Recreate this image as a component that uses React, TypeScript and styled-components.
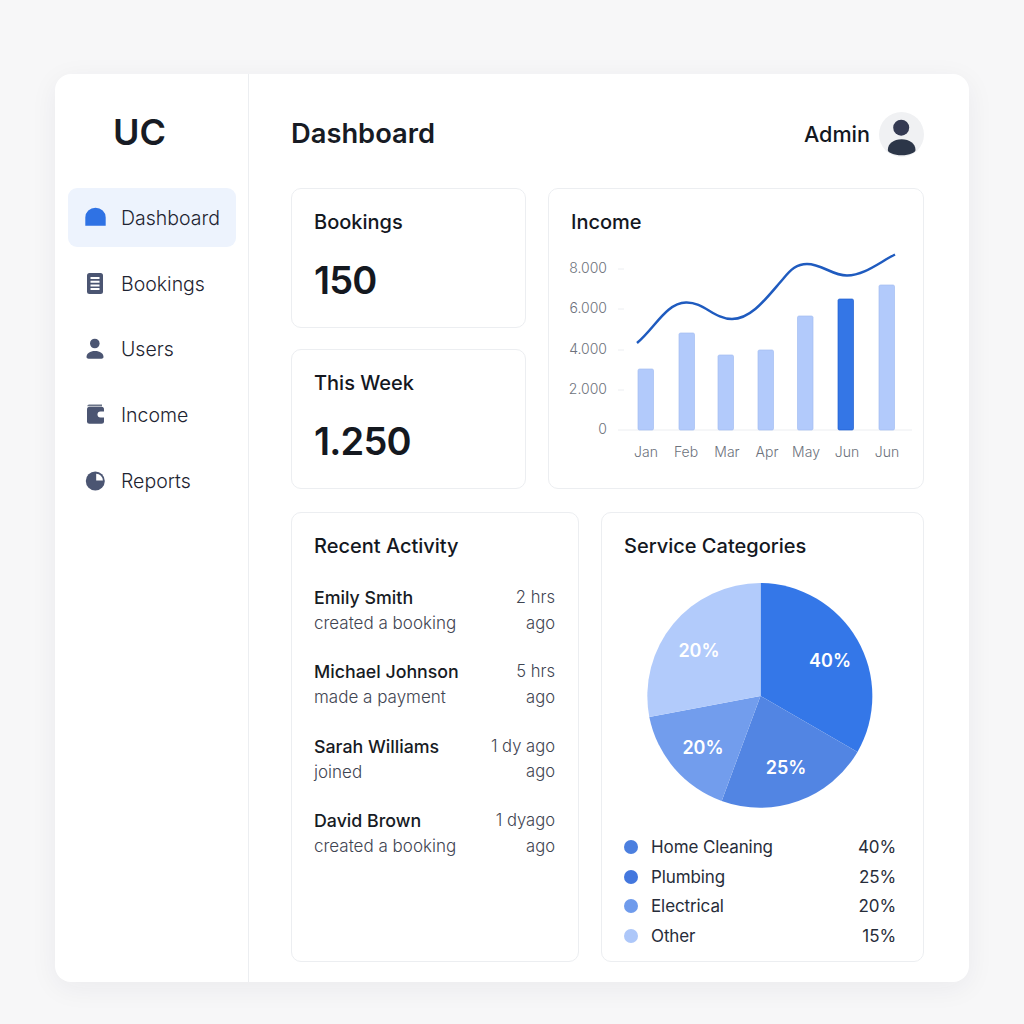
import React from "react";
import styled, { createGlobalStyle } from "styled-components";

const GlobalStyle = createGlobalStyle`
  html, body {
    margin: 0;
    padding: 0;
    background: #f7f7f8;
    font-family: "Inter", "Liberation Sans", sans-serif;
    color: #14181f;
  }
  * { box-sizing: border-box; }
`;

const Page = styled.div`
  width: 1024px;
  height: 1024px;
  padding: 74px 55px 42px;
`;

const Shell = styled.div`
  display: flex;
  width: 914px;
  height: 908px;
  background: #fff;
  border-radius: 16px;
  box-shadow: 0 6px 28px rgba(30, 40, 60, 0.06);
  overflow: hidden;
`;

const Sidebar = styled.aside`
  width: 194px;
  flex: none;
  border-right: 1px solid #eceef1;
  padding: 0 12px 0 13px;
`;

const Logo = styled.div`
  height: 114px;
  padding: 36px 0 0 45px;
  font-size: 36px;
  line-height: 44px;
  font-weight: 600;
  color: #171b24;
`;

const Nav = styled.nav`
  display: flex;
  flex-direction: column;
  gap: 6.7px;
`;

const NavItem = styled.div<{ $active?: boolean }>`
  display: flex;
  align-items: center;
  gap: 15px;
  height: 59px;
  padding: 1px 0 0 16px;
  border-radius: 9px;
  font-size: 19.5px;
  font-weight: 300;
  color: #1e2431;
  background: ${(p) => (p.$active ? "#edf3fd" : "transparent")};
`;

const NavIcon = styled.svg`
  width: 22px;
  height: 24px;
  flex: none;
`;

const Main = styled.main`
  flex: 1;
  padding: 0 45px 20px 42px;
`;

const Header = styled.header`
  display: flex;
  align-items: center;
  justify-content: space-between;
  height: 114px;
  padding-top: 6px;
`;

const Title = styled.h1`
  margin: 0;
  font-size: 27.3px;
  line-height: 34px;
  font-weight: 600;
  color: #171b24;
`;

const Profile = styled.div`
  display: flex;
  align-items: center;
  gap: 9px;
  font-size: 21.6px;
  font-weight: 500;
  color: #14181f;
`;

const Avatar = styled.svg`
  width: 45px;
  height: 45px;
  display: block;
`;

const TopRow = styled.section`
  display: grid;
  grid-template-columns: 235px 376px;
  gap: 22px;
  height: 301px;
`;

const StatColumn = styled.div`
  display: flex;
  flex-direction: column;
  gap: 21px;
`;

const Card = styled.div`
  border: 1px solid #eceef1;
  border-radius: 10px;
  background: #fff;
  padding: 21px 22px 10px;
  min-height: 0;
`;

const StatCard = styled(Card)`
  height: 140px;
`;

const CardTitle = styled.h2`
  margin: 0;
  font-size: 20px;
  line-height: 24px;
  font-weight: 500;
  color: #14181f;
`;

const StatValue = styled.div`
  margin-top: 23px;
  font-size: 38px;
  line-height: 46px;
  font-weight: 600;
  letter-spacing: -0.8px;
  color: #14181f;
`;

const ChartSvg = styled.svg`
  display: block;
  width: 360px;
  height: 210px;
  margin: 16px 0 0 -11px;
`;

const AxisLabel = styled.text<{ $anchor: string }>`
  font-size: 14px;
  fill: #6d727c;
  text-anchor: ${(p) => p.$anchor};
  font-weight: 300;
`;

const BottomRow = styled.section`
  display: grid;
  grid-template-columns: 288px 323px;
  grid-template-rows: 450px;
  gap: 22px;
  margin-top: 23px;
`;

const ActivityList = styled.div`
  margin-top: 27px;
  display: flex;
  flex-direction: column;
  gap: 23.4px;
`;

const ActivityRow = styled.div`
  display: flex;
  justify-content: space-between;
  padding-right: 1px;
`;

const ActivityText = styled.div`
  display: flex;
  flex-direction: column;
`;

const ActivityName = styled.span`
  font-size: 17.8px;
  line-height: 25px;
  font-weight: 500;
  color: #171b24;
`;

const ActivityNote = styled.span`
  font-size: 17px;
  line-height: 26px;
  font-weight: 300;
  color: #3f4552;
`;

const ActivityTime = styled.span`
  text-align: right;
  font-size: 16.6px;
  line-height: 25.500px;
  font-weight: 300;
  color: #3f4552;
`;

const PieSvg = styled.svg`
  display: block;
  width: 240px;
  height: 236px;
  margin: 20px 0 0 16px;
`;

const PieLabel = styled.text`
  font-size: 18px;
  font-weight: 600;
  fill: #fff;
  text-anchor: middle;
  dominant-baseline: central;
`;

const Legend = styled.div`
  margin-top: 18px;
  padding-right: 5px;
`;

const LegendRow = styled.div`
  display: flex;
  align-items: center;
  height: 29.7px;
  font-size: 17px;
  font-weight: 400;
  letter-spacing: -0.1px;
  color: #272d3a;
`;

const LegendDot = styled.span<{ $color: string }>`
  width: 14px;
  height: 14px;
  border-radius: 50%;
  margin-right: 13px;
  background: ${(p) => p.$color};
`;

const LegendValue = styled.span`
  margin-left: auto;
`;

const ICON = "#4b5572";

const navItems = [
  {
    label: "Dashboard",
    active: true,
    icon: <path d="M1.300 19.700V11.500a10.200 9.800 0 0 1 20.400 0v8.200z" fill="#2f72e4" />,
  },
  {
    label: "Bookings",
    icon: (
      <>
        <rect x="3" y="1" width="16" height="21" rx="2.500" fill={ICON} />
        <path d="M6.500 6h9M6.500 9.700h9M6.500 13.400h9M6.500 17.100h9" stroke="#fff" strokeWidth="2" />
      </>
    ),
  },
  {
    label: "Users",
    icon: (
      <>
        <circle cx="10.800" cy="6.500" r="4.800" fill={ICON} />
        <path d="M2.500 20c0-3.500 3.500-6 8.500-6s8.500 2.500 8.500 6c0 1-1 1.700-2 1.700H4.500c-1 0-2-.7-2-1.700z" fill={ICON} />
      </>
    ),
  },
  {
    label: "Income",
    icon: (
      <>
        <path d="M5 1.500h13v1.800H3.200A2 2 0 0 1 5 1.500z" fill="#6b7488" />
        <rect x="3" y="3.700" width="17" height="17" rx="2.500" fill={ICON} />
        <path d="M20 8.500h-3.500a3 3 0 0 0 0 6H20z" fill="#fff" />
      </>
    ),
  },
  {
    label: "Reports",
    icon: (
      <>
        <circle cx="11.300" cy="12" r="9.500" fill={ICON} />
        <path d="M12.200 4.800a7 7 0 0 1 6.700 6.700h-6.700z" fill="#fff" />
      </>
    ),
  },
];

const yTicks = [
  { label: "8.000", y: 268 },
  { label: "6.000", y: 308 },
  { label: "4.000", y: 349 },
  { label: "2.000", y: 389 },
  { label: "0", y: 429 },
];

const bars = [
  { label: "Jan", x: 638, top: 369, center: 646 },
  { label: "Feb", x: 679, top: 333, center: 686 },
  { label: "Mar", x: 718, top: 355, center: 727 },
  { label: "Apr", x: 758, top: 350, center: 767 },
  { label: "May", x: 797.500, top: 316, center: 806 },
  { label: "Jun", x: 838, top: 299, center: 847, highlight: true },
  { label: "Jun", x: 879, top: 285, center: 887 },
];

const activities = [
  { name: "Emily Smith", note: "created a booking", time: "2 hrs" },
  { name: "Michael Johnson", note: "made a payment", time: "5 hrs" },
  { name: "Sarah Williams", note: "joined", time: "1 dy ago" },
  { name: "David Brown", note: "created a booking", time: "1 dyago" },
];

const slices = [
  { d: "M760.500 696V583A113 113 0 0 1 857.500 752Z", fill: "#3477e8" },
  { d: "M760.500 696L857.500 752A113 113 0 0 1 721.700 801Z", fill: "#5285e3" },
  { d: "M760.500 696L721.700 801A113 113 0 0 1 649.300 717Z", fill: "#729ded" },
  { d: "M760.500 696L649.300 717A113 113 0 0 1 760.500 583Z", fill: "#b2cbfb" },
];

const pieLabels = [
  { text: "40%", x: 830, y: 660 },
  { text: "25%", x: 786, y: 767 },
  { text: "20%", x: 703, y: 747 },
  { text: "20%", x: 699, y: 650 },
];

const legend = [
  { label: "Home Cleaning", value: "40%", color: "#4b7fdf" },
  { label: "Plumbing", value: "25%", color: "#4377de" },
  { label: "Electrical", value: "20%", color: "#6f9bec" },
  { label: "Other", value: "15%", color: "#adc7f9" },
];

export default function App() {
  return (
    <Page>
      <GlobalStyle />
      <Shell>
        <Sidebar>
          <Logo>UC</Logo>
          <Nav>
            {navItems.map((item) => (
              <NavItem key={item.label} $active={item.active}>
                <NavIcon viewBox="0 0 22 24">{item.icon}</NavIcon>
                {item.label}
              </NavItem>
            ))}
          </Nav>
        </Sidebar>
        <Main>
          <Header>
            <Title>Dashboard</Title>
            <Profile>
              Admin
              <Avatar viewBox="0 0 45 45">
                <circle cx="22.500" cy="22.500" r="22.500" fill="#f0f1f3" />
                <circle cx="22.200" cy="15.700" r="8" fill="#343a52" />
                <path d="M8.800 38c0-6.500 6-10.700 13.800-10.700S36.500 31.500 36.500 38c0 2.500-6 5.300-13.900 5.300S8.800 40.500 8.800 38z" fill="#2c3648" />
              </Avatar>
            </Profile>
          </Header>
          <TopRow>
            <StatColumn>
              <StatCard>
                <CardTitle>Bookings</CardTitle>
                <StatValue>150</StatValue>
              </StatCard>
              <StatCard>
                <CardTitle>This Week</CardTitle>
                <StatValue>1.250</StatValue>
              </StatCard>
            </StatColumn>
            <Card>
              <CardTitle>Income</CardTitle>
              <ChartSvg viewBox="560 250 360 210">
                {yTicks.map((t) => (
                  <React.Fragment key={t.label}>
                    <AxisLabel $anchor="end" x={607} y={t.y + 5}>
                      {t.label}
                    </AxisLabel>
                    <line x1={618} x2={t.y === 429 ? 912 : 624} y1={t.y + 1} y2={t.y + 1} stroke="#eceef1" />
                  </React.Fragment>
                ))}
                {bars.map((b, i) => (
                  <React.Fragment key={i}>
                    <rect
                      x={b.x}
                      y={b.top}
                      width={15.500}
                      height={430 - b.top}
                      rx={1.500}
                      fill={b.highlight ? "#3476e6" : "#b2cafb"}
                      stroke={b.highlight ? "#1f5fcf" : "#a4bdf0"}
                      strokeWidth={0.7}
                    />
                    <AxisLabel $anchor="middle" x={b.center} y={457}>
                      {b.label}
                    </AxisLabel>
                  </React.Fragment>
                ))}
                <path
                  d="M637 343C655 328 666 303 686 302.500C704 302 714 319 732 319C752 319 768 296 783 279C791 269 797 264 807 264C822 264 832 275.500 847 275.500C864 275.500 880 262 895 254.500"
                  fill="none"
                  stroke="#1f5bbf"
                  strokeWidth={2.500}
                />
              </ChartSvg>
            </Card>
          </TopRow>
          <BottomRow>
            <Card>
              <CardTitle>Recent Activity</CardTitle>
              <ActivityList>
                {activities.map((a) => (
                  <ActivityRow key={a.name}>
                    <ActivityText>
                      <ActivityName>{a.name}</ActivityName>
                      <ActivityNote>{a.note}</ActivityNote>
                    </ActivityText>
                    <ActivityText>
                      <ActivityTime>{a.time}</ActivityTime>
                      <ActivityTime>ago</ActivityTime>
                    </ActivityText>
                  </ActivityRow>
                ))}
              </ActivityList>
            </Card>
            <Card>
              <CardTitle>Service Categories</CardTitle>
              <PieSvg viewBox="640 578 240 236">
                {slices.map((s) => (
                  <path key={s.fill} d={s.d} fill={s.fill} />
                ))}
                {pieLabels.map((l) => (
                  <PieLabel key={l.x} x={l.x} y={l.y}>
                    {l.text}
                  </PieLabel>
                ))}
              </PieSvg>
              <Legend>
                {legend.map((l) => (
                  <LegendRow key={l.label}>
                    <LegendDot $color={l.color} />
                    {l.label}
                    <LegendValue>{l.value}</LegendValue>
                  </LegendRow>
                ))}
              </Legend>
            </Card>
          </BottomRow>
        </Main>
      </Shell>
    </Page>
  );
}
